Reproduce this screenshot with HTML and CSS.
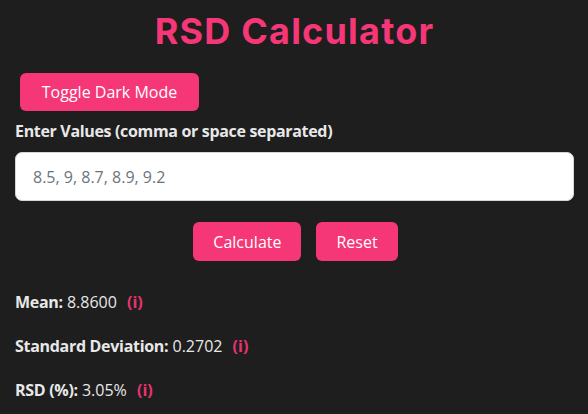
FILE: index.html
```html
<!DOCTYPE html>
<html lang="en">
<head>
<meta charset="utf-8">
<title>RSD Calculator</title>
<link rel="stylesheet" href="styles.css">
</head>
<body>
<div class="container">
  <h1 class="title">RSD Calculator</h1>
  <button class="btn btn-toggle">Toggle Dark Mode</button>
  <label class="label" for="values">Enter Values (comma or space separated)</label>
  <input class="input" id="values" type="text" placeholder="8.5, 9, 8.7, 8.9, 9.2">
  <div class="actions">
    <button class="btn">Calculate</button>
    <button class="btn">Reset</button>
  </div>
  <div class="results">
    <p class="result"><strong class="key">Mean:</strong> 8.8600 <span class="info">(i)</span></p>
    <p class="result"><strong class="key">Standard Deviation:</strong> 0.2702 <span class="info">(i)</span></p>
    <p class="result"><strong class="key">RSD (%):</strong> 3.05% <span class="info">(i)</span></p>
  </div>
</div>
</body>
</html>
```
FILE: styles.css
```css
html, body {
  margin: 0;
  padding: 0;
  background: #1e1e1e;
}
body {
  font-family: "Open Sans", "Noto Sans", sans-serif;
  color: #e8e8e8;
  font-size: 16px;
}
.container {
  padding: 0 14px 0 15px;
  display: flex;
  flex-direction: column;
  align-items: flex-start;
}
.title {
  align-self: stretch;
  text-align: center;
  font-family: Inter, sans-serif;
  font-weight: 700;
  font-size: 36px;
  letter-spacing: 1.2px;
  color: #f53677;
  margin: 9px 0 0;
  line-height: 44px;
}
.btn {
  background: #f53677;
  color: #fff;
  border: none;
  border-radius: 6px;
  font-family: "Open Sans", sans-serif;
  font-size: 16px;
  height: 39px;
  padding: 0 20px;
}
.btn-toggle {
  margin: 20px 0 0 5px;
  width: 179px;
  height: 38px;
  padding: 0;
}
.label {
  font-weight: 700;
  margin-top: 10px;
  font-size: 16px;
  letter-spacing: -0.33px;
  line-height: 20px;
}
.input {
  align-self: stretch;
  box-sizing: border-box;
  margin-top: 11px;
  height: 49px;
  border: 1px solid #d6d6d6;
  border-radius: 7px;
  padding: 0 17px;
  font-family: "Open Sans", sans-serif;
  font-size: 16px;
  background: #fff;
}
.input::placeholder {
  color: #6c757d;
}
.actions {
  align-self: stretch;
  display: flex;
  justify-content: center;
  gap: 15px;
  margin-top: 21px;
  padding-left: 2px;
}
.results {
  margin-top: 31px;
}
.result {
  margin: 0 0 24px;
  font-size: 16px;
  line-height: 20px;
}
.key {
  letter-spacing: -0.3px;
}
.info {
  color: #e8336f;
  font-weight: 700;
  margin-left: 6px;
}
```
